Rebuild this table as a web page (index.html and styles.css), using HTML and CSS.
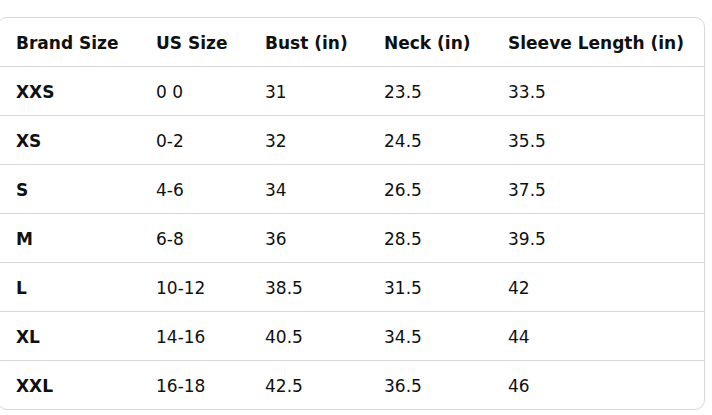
FILE: index.html
```html
<!DOCTYPE html>
<html>
<head>
<meta charset="utf-8">
<link rel="stylesheet" href="styles.css">
</head>
<body>
<div class="card">
  <table class="size-table">
    <thead>
      <tr><th>Brand Size</th><th>US Size</th><th>Bust (in)</th><th>Neck (in)</th><th>Sleeve Length (in)</th></tr>
    </thead>
    <tbody>
      <tr><th>XXS</th><td>0 0</td><td>31</td><td>23.5</td><td>33.5</td></tr>
      <tr><th>XS</th><td>0-2</td><td>32</td><td>24.5</td><td>35.5</td></tr>
      <tr><th>S</th><td>4-6</td><td>34</td><td>26.5</td><td>37.5</td></tr>
      <tr><th>M</th><td>6-8</td><td>36</td><td>28.5</td><td>39.5</td></tr>
      <tr><th>L</th><td>10-12</td><td>38.5</td><td>31.5</td><td>42</td></tr>
      <tr><th>XL</th><td>14-16</td><td>40.5</td><td>34.5</td><td>44</td></tr>
      <tr><th>XXL</th><td>16-18</td><td>42.5</td><td>36.5</td><td>46</td></tr>
    </tbody>
  </table>
</div>
</body>
</html>
```
FILE: styles.css
```css
html, body {
  margin: 0;
  padding: 0;
  background: #ffffff;
}
body {
  padding-top: 17px;
  font-family: "DejaVu Sans", "Noto Sans", sans-serif;
  color: #0f1111;
}
.card {
  margin-left: -3px;
  width: 708px;
  border: 1px solid #d5d9d9;
  border-radius: 10px;
  overflow: hidden;
  box-sizing: border-box;
}
.size-table {
  width: 100%;
  border-collapse: collapse;
  table-layout: fixed;
  font-size: 17px;
}
.size-table th,
.size-table td {
  height: 46px;
  padding: 2px 0 0 18px;
  text-align: left;
  vertical-align: middle;
  border-bottom: 1px solid #d5d9d9;
  white-space: nowrap;
}
.size-table tbody tr:last-child th,
.size-table tbody tr:last-child td {
  border-bottom: none;
}
.size-table th { font-weight: 700; }
.size-table td { font-weight: 400; }
.size-table th:nth-child(1), .size-table td:nth-child(1) { width: 122px; }
.size-table th:nth-child(2), .size-table td:nth-child(2) { width: 91px; }
.size-table th:nth-child(3), .size-table td:nth-child(3) { width: 101px; }
.size-table th:nth-child(4), .size-table td:nth-child(4) { width: 106px; }
```
